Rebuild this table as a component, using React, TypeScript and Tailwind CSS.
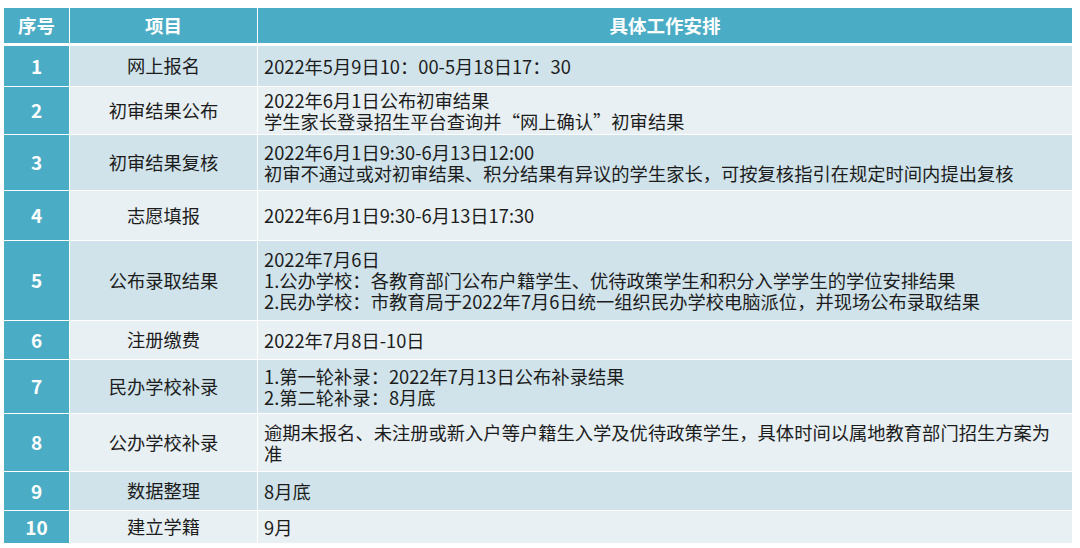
import React from "react";

type Row = { no: string; item: string; lines: string[]; h: string; odd: boolean };

const rows: Row[] = [
  { no: "1", item: "网上报名", lines: ["2022年5月9日10：00-5月18日17：30"], h: "h-[40px]", odd: true },
  { no: "2", item: "初审结果公布", lines: ["2022年6月1日公布初审结果", "学生家长登录招生平台查询并“网上确认”初审结果"], h: "h-[47px]", odd: false },
  { no: "3", item: "初审结果复核", lines: ["2022年6月1日9:30-6月13日12:00", "初审不通过或对初审结果、积分结果有异议的学生家长，可按复核指引在规定时间内提出复核"], h: "h-[55px]", odd: true },
  { no: "4", item: "志愿填报", lines: ["2022年6月1日9:30-6月13日17:30"], h: "h-[49px]", odd: false },
  {
    no: "5",
    item: "公布录取结果",
    lines: [
      "2022年7月6日",
      "1.公办学校：各教育部门公布户籍学生、优待政策学生和积分入学学生的学位安排结果",
      "2.民办学校：市教育局于2022年7月6日统一组织民办学校电脑派位，并现场公布录取结果",
    ],
    h: "h-[79px]",
    odd: true,
  },
  { no: "6", item: "注册缴费", lines: ["2022年7月8日-10日"], h: "h-[38px]", odd: false },
  { no: "7", item: "民办学校补录", lines: ["1.第一轮补录：2022年7月13日公布补录结果", "2.第二轮补录：8月底"], h: "h-[53px]", odd: true },
  {
    no: "8",
    item: "公办学校补录",
    lines: ["逾期未报名、未注册或新入户等户籍生入学及优待政策学生，具体时间以属地教育部门招生方案为", "准"],
    h: "h-[57px]",
    odd: false,
  },
  { no: "9", item: "数据整理", lines: ["8月底"], h: "h-[38px]", odd: true },
  { no: "10", item: "建立学籍", lines: ["9月"], h: "h-[32px]", odd: false },
];

export default function App() {
  return (
    <div className="w-[1080px] h-[548px] bg-white overflow-hidden pt-[8px] pl-[4px] font-['Noto_Sans_CJK_SC',sans-serif]">
      <div className="w-[1068px] flex flex-col">
        {/* header */}
        <div className="h-[35px] flex gap-[1px] mb-[3px] text-white font-bold text-[18.5px]">
          <div className="w-[65px] bg-[#4bacc6] flex items-center justify-center">序号</div>
          <div className="w-[187px] bg-[#4bacc6] flex items-center justify-center">项目</div>
          <div className="flex-1 bg-[#4bacc6] flex items-center justify-center">具体工作安排</div>
        </div>

        <div className="flex flex-col gap-[1px]">
          {rows.map((r) => (
            <div key={r.no} className={`${r.h} flex gap-[1px]`}>
              <div className="w-[65px] bg-[#4bacc6] flex items-center justify-center text-white font-bold text-[19px]">
                {r.no}
              </div>
              <div
                className={`w-[187px] flex items-center justify-center text-[18.3px] text-[#1c1c1c] ${
                  r.odd ? "bg-[#d0e3ea]" : "bg-[#e8f0f3]"
                }`}
              >
                {r.item}
              </div>
              <div
                className={`flex-1 flex flex-col justify-center pl-[6px] text-[18.3px] leading-[21px] text-[#1c1c1c] whitespace-nowrap ${
                  r.odd ? "bg-[#d0e3ea]" : "bg-[#e8f0f3]"
                }`}
              >
                {r.lines.map((l, i) => (
                  <div key={i}>{l}</div>
                ))}
              </div>
            </div>
          ))}
        </div>
      </div>
    </div>
  );
}
